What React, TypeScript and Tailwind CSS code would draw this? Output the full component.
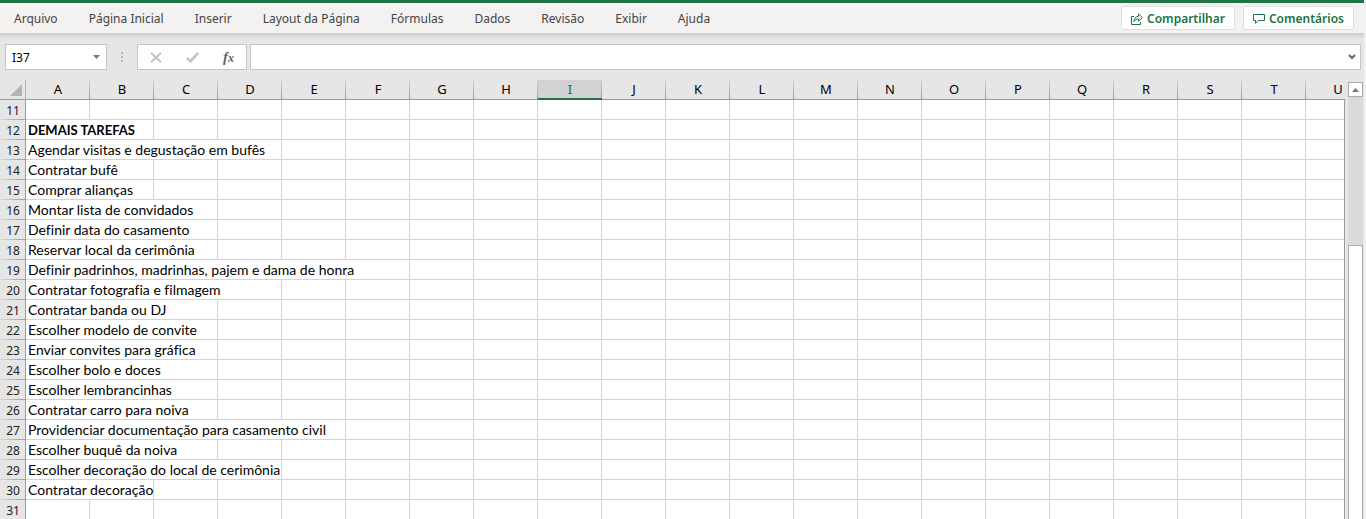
import React from 'react';
import clsx from 'clsx';

const tabs = [
    'Arquivo',
    'Página Inicial',
    'Inserir',
    'Layout da Página',
    'Fórmulas',
    'Dados',
    'Revisão',
    'Exibir',
    'Ajuda',
];

const columns = 'ABCDEFGHIJKLMNOPQRSTU'.split('');
const activeColumn = 'I';

// span = how many columns the text runs over
const rows = [
    { number: 11, text: '', span: 1 },
    { number: 12, text: 'DEMAIS TAREFAS', span: 2, bold: true },
    { number: 13, text: 'Agendar visitas e degustação em bufês', span: 4 },
    { number: 14, text: 'Contratar bufê', span: 2 },
    { number: 15, text: 'Comprar alianças', span: 2 },
    { number: 16, text: 'Montar lista de convidados', span: 3 },
    { number: 17, text: 'Definir data do casamento', span: 3 },
    { number: 18, text: 'Reservar local da cerimônia', span: 3 },
    { number: 19, text: 'Definir padrinhos, madrinhas, pajem e dama de honra', span: 6 },
    { number: 20, text: 'Contratar fotografia e filmagem', span: 4 },
    { number: 21, text: 'Contratar banda ou DJ', span: 3 },
    { number: 22, text: 'Escolher modelo de convite', span: 3 },
    { number: 23, text: 'Enviar convites para gráfica', span: 3 },
    { number: 24, text: 'Escolher bolo e doces', span: 3 },
    { number: 25, text: 'Escolher lembrancinhas', span: 3 },
    { number: 26, text: 'Contratar carro para noiva', span: 3 },
    { number: 27, text: 'Providenciar documentação para casamento civil', span: 5 },
    { number: 28, text: 'Escolher buquê da noiva', span: 3 },
    { number: 29, text: 'Escolher decoração do local de cerimônia', span: 4 },
    { number: 30, text: 'Contratar decoração', span: 2 },
    { number: 31, text: '', span: 1 },
];

function Ribbon() {
    const actionClass =
        'flex h-6 items-center gap-1 rounded-xs border border-[#e1dfdd] bg-white px-[9px] pt-px text-[12px] font-semibold text-[#217346]';

    return (
        <header className="flex h-[33px] items-center justify-between border-t-3 border-[#217346] bg-[#f3f2f1] pr-[10px] pl-[14px]">
            <nav className="flex gap-[31px] pt-[2px] text-[12px] text-[#444444]">
                {tabs.map((tab) => (
                    <button key={tab} type="button" className="whitespace-nowrap">
                        {tab}
                    </button>
                ))}
            </nav>
            <div className="flex gap-2">
                <button type="button" className={actionClass}>
                    <svg className="size-3" viewBox="0 0 12 12" fill="none" stroke="currentColor">
                        <path d="M3 3.5H.5v8h9V9" />
                        <path d="M2.8 8.6C3.2 5.2 4.8 3.5 7.5 3.3V.9L11.4 4.6 7.5 8.2V5.9C5.4 5.9 4 6.8 2.8 8.6Z" />
                    </svg>
                    Compartilhar
                </button>
                <button type="button" className={actionClass}>
                    <svg className="size-3" viewBox="0 0 12 12" fill="none" stroke="currentColor">
                        <path d="M.5 1.5h11v6H5.5L2.5 10.3V7.5h-2Z" />
                    </svg>
                    Comentários
                </button>
            </div>
        </header>
    );
}

function FormulaBar() {
    return (
        <div className="flex items-start bg-linear-to-b from-[#cdcdcd] to-[#e6e6e6] to-[6px] pt-[11px] pr-[3px] pb-[10px] pl-[5px]">
            <div className="flex h-[26px] w-[102px] items-center border border-[#c6c6c6] bg-white">
                <input
                    aria-label="Caixa de nome"
                    defaultValue="I37"
                    className="w-full min-w-0 flex-1 pt-px pl-[6px] text-[12px] text-black outline-none"
                />
                <button type="button" aria-label="Abrir lista de nomes" className="px-[6px]">
                    <svg className="h-1 w-[7px]" viewBox="0 0 7 4" fill="#777777">
                        <path d="M0 0h7L3.5 4Z" />
                    </svg>
                </button>
            </div>
            <svg className="mx-[14px] h-[26px] w-[2px]" viewBox="0 0 2 26" fill="#b4b4b4">
                <path d="M0 8h2v2H0ZM0 12h2v2H0ZM0 16h2v2H0Z" />
            </svg>
            <div className="flex h-[26px] w-[110px] items-center justify-around border border-[#c6c6c6] bg-white">
                <button type="button" aria-label="Cancelar">
                    <svg className="h-[11px] w-3" viewBox="0 0 12 11" fill="none" stroke="#c3c3c3" strokeWidth="2">
                        <path d="M1 .8 11 10.2M11 .8 1 10.2" />
                    </svg>
                </button>
                <button type="button" aria-label="Inserir">
                    <svg className="h-[11px] w-[13px]" viewBox="0 0 13 11" fill="none" stroke="#c3c3c3" strokeWidth="2.6">
                        <path d="M1 6 4.6 9.2 12.2 1" />
                    </svg>
                </button>
                <button
                    type="button"
                    aria-label="Inserir função"
                    className="font-['Liberation_Serif',serif] text-[15px] leading-5 font-bold text-[#666666] italic"
                >
                    f<span className="text-[12px]">x</span>
                </button>
            </div>
            <div className="ml-[3px] flex h-[26px] flex-1 items-center border border-[#c6c6c6] bg-white">
                <input
                    aria-label="Barra de fórmulas"
                    className="w-full min-w-0 flex-1 px-2 text-[12px] text-black outline-none"
                />
                <button type="button" aria-label="Expandir barra de fórmulas" className="px-1">
                    <svg className="h-[6px] w-2" viewBox="0 0 8 6" fill="none" stroke="#666666" strokeWidth="2">
                        <path d="M1 1l3 3 3-3" />
                    </svg>
                </button>
            </div>
        </div>
    );
}

function Sheet() {
    return (
        <div className="min-w-0 flex-1 overflow-hidden">
            <table className="w-[1370px] table-fixed border-separate border-spacing-0">
                <colgroup>
                    <col className="w-[26px]" />
                    {columns.map((column) => (
                        <col key={column} className="w-16" />
                    ))}
                </colgroup>
                <thead>
                    <tr className="h-5">
                        <td className="border-r border-b border-[#9b9b9b] border-r-[#b5b5b5] p-0">
                            <svg className="ml-[10px] size-3" viewBox="0 0 12 12" fill="#b4b4b4">
                                <path d="M12 0v12H0Z" />
                            </svg>
                        </td>
                        {columns.map((column) => (
                            <th
                                key={column}
                                scope="col"
                                className={clsx(
                                    'border-b p-0 text-[13px] leading-[19px] font-normal',
                                    'bg-linear-to-b from-[#d0d0d0] to-[#9b9b9b] bg-size-[1px_100%] bg-right bg-no-repeat',
                                    column === activeColumn
                                        ? 'border-[#217346] bg-[#d2d2d2] text-[#217346] shadow-[inset_0_-1px_#217346]'
                                        : 'border-[#9b9b9b] text-black'
                                )}
                            >
                                {column}
                            </th>
                        ))}
                    </tr>
                </thead>
                <tbody>
                    {rows.map((row) => (
                        <tr key={row.number} className="h-5">
                            <th
                                scope="row"
                                className="border-r border-[#9b9b9b] bg-linear-to-r from-[#d8d8d8] to-[#9b9b9b] bg-size-[100%_1px] bg-bottom bg-no-repeat p-0 pl-px text-[12px] leading-[19px] font-normal text-[#222222]"
                            >
                                {row.number}
                            </th>
                            <td
                                colSpan={row.span}
                                className={clsx(
                                    "border-r border-b border-[#d4d4d4] bg-white p-0 pl-[2px] font-['Lato',sans-serif] whitespace-nowrap text-black [font-variant-ligatures:none]",
                                    row.bold ? 'pt-px text-[13px] leading-[18px] font-bold' : 'text-[14px] leading-[19px]'
                                )}
                            >
                                {row.text}
                            </td>
                            {columns.slice(row.span).map((column) => (
                                <td key={column} className="border-r border-b border-[#d4d4d4] bg-white p-0" />
                            ))}
                        </tr>
                    ))}
                </tbody>
            </table>
        </div>
    );
}

function ScrollBar() {
    return (
        <div className="flex">
            <div className="mt-[19px] w-1 border-l border-[#9b9b9b]" />
            <div className="mt-[2px] flex w-[15px] flex-col bg-[#dadada]">
                <button
                    type="button"
                    aria-label="Rolar para cima"
                    className="flex h-[15px] items-center justify-center border border-[#ababab] bg-white"
                >
                    <svg className="h-1 w-[7px]" viewBox="0 0 7 4" fill="#777777">
                        <path d="M0 4h7L3.5 0Z" />
                    </svg>
                </button>
                <div className="mt-[148px] flex-1 border border-b-0 border-[#ababab] bg-white" />
            </div>
        </div>
    );
}

export default function App() {
    return (
        <div className="h-screen overflow-hidden bg-[#f0f1f0] pr-[2px] font-['Noto_Sans',sans-serif]">
            <div className="flex h-full flex-col bg-[#e6e6e6]">
                <Ribbon />
                <FormulaBar />
                <main className="flex min-h-0 flex-1 pr-px">
                    <Sheet />
                    <ScrollBar />
                </main>
            </div>
        </div>
    );
}
